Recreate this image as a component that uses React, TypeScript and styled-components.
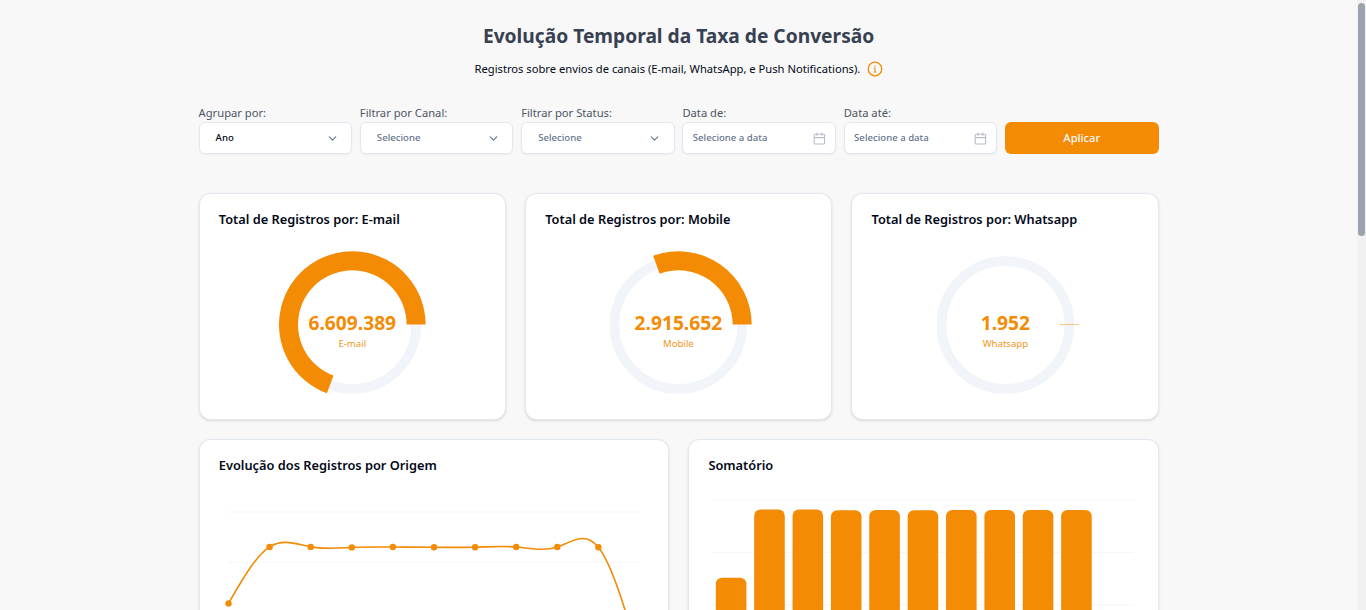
import React from 'react';
import styled, { createGlobalStyle } from 'styled-components';
import { ChevronDown } from 'lucide-react';

const ORANGE = '#f38b05';

const GlobalStyle = createGlobalStyle`
  * { box-sizing: border-box; }
  html { font-size: 12.8px; }
  body {
    margin: 0;
    background: #f8f8f8;
    font-family: 'Noto Sans', sans-serif;
    color: #020817;
    overflow: hidden;
  }
`;

const Viewport = styled.div`
  display: flex;
  height: 610px;
  overflow: hidden;
`;

const Main = styled.main`
  flex: 1;
  min-width: 0;
  display: flex;
  flex-direction: column;
  align-items: center;
`;

const ScrollTrack = styled.div`
  flex: none;
  width: 8.8px;
  padding: 3px 1px 0 0.8px;
  background: #f1f1f1;
`;

const ScrollThumb = styled.div`
  height: 233px;
  border-radius: 4px;
  background: #9ca3af;
`;

const Content = styled.div`
  width: 960px;
  flex: none;
`;

const Title = styled.h1`
  margin: 22px 0 0;
  font-size: 1.5rem;
  line-height: 28px;
  font-weight: 700;
  text-align: center;
  color: #374151;
`;

const Subtitle = styled.div`
  display: flex;
  align-items: center;
  justify-content: center;
  gap: 6.4px;
  margin: 10px 0 0;
  height: 18px;
  font-size: 0.875rem;
`;

const SubtitleText = styled.p`
  margin: 0;
  padding-bottom: 2px;
`;

const Filters = styled.section`
  display: grid;
  grid-template-columns: repeat(6, 1fr);
  gap: 0.6rem;
  align-items: end;
  margin-top: 26px;
`;

const Field = styled.div`
  display: flex;
  flex-direction: column;
`;

const Label = styled.label`
  margin-bottom: 1px;
  font-size: 0.875rem;
  line-height: 17px;
  color: #4b5563;
`;

const Control = styled.div<{ $date?: boolean; $filled?: boolean }>`
  display: flex;
  align-items: center;
  justify-content: space-between;
  height: 32px;
  padding: ${p => (p.$date ? '0 9px 0 9.4px' : '0 12.4px 0 16px')};
  border: 1px solid #e2e8f0;
  border-radius: 6px;
  background: #fff;
  box-shadow: 0 1px 2px rgba(0, 0, 0, 0.05);
  font-size: 0.75rem;
  font-weight: 500;
  color: ${p => (p.$filled ? '#020817' : '#64748b')};
`;

const ControlValue = styled.span`
  padding-bottom: 2px;
`;

const ApplyButton = styled.button`
  height: 32px;
  padding: 0 6px 1px;
  border: 0;
  border-radius: 6px;
  background: ${ORANGE};
  color: #f8fafc;
  font: 500 0.875rem 'Noto Sans', sans-serif;
`;

const CardRow = styled.section<{ $columns: number; $top: number }>`
  display: grid;
  grid-template-columns: repeat(${p => p.$columns}, 1fr);
  gap: 1.5rem;
  margin-top: ${p => p.$top}px;
`;

const Card = styled.article<{ $height: number }>`
  height: ${p => p.$height}px;
  overflow: hidden;
  border: 1px solid #e2e8f0;
  border-radius: 0.9rem;
  background: #fff;
  box-shadow: 0 1px 3px rgba(0, 0, 0, 0.1), 0 1px 2px -1px rgba(0, 0, 0, 0.1);
`;

const CardTitle = styled.h2`
  margin: 16px 0 1px 19.2px;
  font-size: 1rem;
  line-height: 18px;
  font-weight: 600;
`;

const Chart = styled.svg`
  display: block;
  font-family: 'Noto Sans', sans-serif;
`;

const InfoIcon = () => (
  <svg width="16" height="16" viewBox="0 0 16 16" fill="none" stroke={ORANGE} strokeWidth="1.3">
    <circle cx="8" cy="8" r="6.8" />
    <path d="M8 7v4.2M6.8 7.2H8M6.8 11h2.4M8 4.5v1.4" strokeWidth="1" />
  </svg>
);

const CalendarIcon = () => (
  <svg width="13" height="13" viewBox="0 0 13 13" fill="none" stroke="#b6becb" strokeWidth="1.1">
    <rect x="1.2" y="2.2" width="10.4" height="9.8" rx="1" />
    <path d="M1.2 5.6h10.4M4 .4v3.4M8.8 .4v3.4" />
  </svg>
);

const polar = (cx: number, cy: number, r: number, deg: number) => {
  const a = (deg * Math.PI) / 180;
  return `${cx + r * Math.cos(a)} ${cy - r * Math.sin(a)}`;
};

const TOTAL = 6609389 + 2915652 + 1952;

const Gauge = ({ value, name, cx }: { value: number; name: string; cx: number }) => {
  const cy = 95.6;
  const outer = 73.3;
  const inner = 54.3;
  const sweep = (value / TOTAL) * 360;
  const large = sweep > 180 ? 1 : 0;
  const d = `M${polar(cx, cy, outer, 0)}A${outer} ${outer} 0 ${large} 0 ${polar(cx, cy, outer, sweep)}L${polar(cx, cy, inner, sweep)}A${inner} ${inner} 0 ${large} 1 ${polar(cx, cy, inner, 0)}Z`;
  return (
    <Chart width="305" height="188">
      <circle cx={cx} cy={cy + 0.4} r="63.9" fill="none" stroke="#f1f5f9" strokeWidth="9.8" />
      <path d={d} fill={ORANGE} stroke={ORANGE} strokeWidth={sweep < 1 ? 0.3 : 0} />
      <text x={cx} y="101" textAnchor="middle" fontSize="19.2" fontWeight="700" fill={ORANGE}>
        {value.toLocaleString('de-DE')}
      </text>
      <text x={cx} y="118" textAnchor="middle" fontSize="9.6" fill={ORANGE} opacity="0.9">
        {name}
      </text>
    </Chart>
  );
};

/* Natural cubic spline through equally spaced points. */
const naturalSpline = (xs: number[], ys: number[]) => {
  const n = ys.length;
  const m = Array(n).fill(0);
  for (let pass = 0; pass < 80; pass++) {
    for (let i = 1; i < n - 1; i++) {
      m[i] = (6 * (ys[i - 1] - 2 * ys[i] + ys[i + 1]) - m[i - 1] - m[i + 1]) / 4;
    }
  }
  let d = `M${xs[0]} ${ys[0]}`;
  for (let i = 0; i < n - 1; i++) {
    const rise = ys[i + 1] - ys[i];
    const s0 = rise - (2 * m[i] + m[i + 1]) / 6;
    const s1 = rise + (m[i] + 2 * m[i + 1]) / 6;
    const h = (xs[i + 1] - xs[i]) / 3;
    d += `C${xs[i] + h} ${ys[i] + s0 / 3} ${xs[i + 1] - h} ${ys[i + 1] - s1 / 3} ${xs[i + 1]} ${ys[i + 1]}`;
  }
  return d;
};

const lineY = [128.4, 71.9, 71.9, 72.4, 72, 72.3, 72.2, 72, 72, 72.3, 183];
const lineX = lineY.map((_, i) => 28.5 + i * 41.1);

const LineChart = () => (
  <Chart width="468" height="240">
    {[37, 87.4, 137.8, 188.2].map(y => (
      <path key={y} d={`M28.5 ${y}H439.5`} stroke="#f4f5f8" />
    ))}
    <path d={naturalSpline(lineX, lineY)} fill="none" stroke={ORANGE} strokeWidth="1.6" />
    {lineY.map((y, i) => (
      <circle key={i} cx={lineX[i]} cy={y} r="3.2" fill={ORANGE} />
    ))}
  </Chart>
);

const barTops = [102.7, 34.5, 34.5, 35.2, 34.9, 35.2, 35, 35, 35, 35];

const BarChart = () => (
  <Chart width="468" height="240">
    {[25, 77.4, 129.8, 182].map(y => (
      <path key={y} d={`M23 ${y}H445`} stroke="#f6f6f6" />
    ))}
    {barTops.map((y, i) => (
      <rect key={i} x={26.8 + i * 38.37} y={y} width="30.6" height={260 - y} rx="6.4" fill={ORANGE} />
    ))}
  </Chart>
);

const gauges = [
  { name: 'E-mail', value: 6609389, cx: 152.3 },
  { name: 'Mobile', value: 2915652, cx: 152.4 },
  { name: 'Whatsapp', value: 1952, cx: 153.4 },
];

const selects = [
  { label: 'Agrupar por:', value: 'Ano', filled: true },
  { label: 'Filtrar por Canal:', value: 'Selecione', filled: false },
  { label: 'Filtrar por Status:', value: 'Selecione', filled: false },
];

export default function App() {
  return (
    <>
      <GlobalStyle />
      <Viewport>
        <Main>
          <Content>
            <Title>Evolução Temporal da Taxa de Conversão</Title>
            <Subtitle>
              <SubtitleText>
                Registros sobre envios de canais (E-mail, WhatsApp, e Push Notifications).
              </SubtitleText>
              <InfoIcon />
            </Subtitle>
            <Filters>
              {selects.map(s => (
                <Field key={s.label}>
                  <Label>{s.label}</Label>
                  <Control $filled={s.filled}>
                    <ControlValue>{s.value}</ControlValue>
                    <ChevronDown size={13} color="#64748b" />
                  </Control>
                </Field>
              ))}
              {['Data de:', 'Data até:'].map(label => (
                <Field key={label}>
                  <Label>{label}</Label>
                  <Control $date>
                    <ControlValue>Selecione a data</ControlValue>
                    <CalendarIcon />
                  </Control>
                </Field>
              ))}
              <ApplyButton>Aplicar</ApplyButton>
            </Filters>
            <CardRow $columns={3} $top={39}>
              {gauges.map(g => (
                <Card key={g.name} $height={227}>
                  <CardTitle>Total de Registros por: {g.name}</CardTitle>
                  <Gauge {...g} />
                </Card>
              ))}
            </CardRow>
            <CardRow $columns={2} $top={19}>
              <Card $height={280}>
                <CardTitle>Evolução dos Registros por Origem</CardTitle>
                <LineChart />
              </Card>
              <Card $height={280}>
                <CardTitle>Somatório</CardTitle>
                <BarChart />
              </Card>
            </CardRow>
          </Content>
        </Main>
        <ScrollTrack>
          <ScrollThumb />
        </ScrollTrack>
      </Viewport>
    </>
  );
}
